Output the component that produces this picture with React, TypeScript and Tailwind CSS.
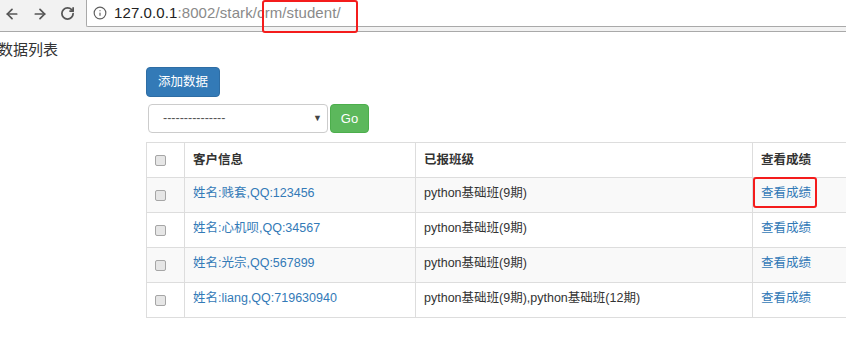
import { ArrowLeft, ArrowRight, RotateCw, Info } from "lucide-react";

const rows = [
  { name: "姓名:贱套,QQ:123456", classes: "python基础班(9期)" },
  { name: "姓名:心机呗,QQ:34567", classes: "python基础班(9期)" },
  { name: "姓名:光宗,QQ:567899", classes: "python基础班(9期)" },
  { name: "姓名:liang,QQ:719630940", classes: "python基础班(9期),python基础班(12期)" },
];

function Checkbox() {
  return (
    <span className="ml-[8px] block h-[11px] w-[11px] rounded-[2px] border border-[#a6a6a6] bg-[#e6e6e6]" />
  );
}

function BrowserBar() {
  return (
    <div className="flex h-[32px] items-start border-b border-[#a9a9a9] bg-[#f2f2f2]">
      <div className="flex h-[27px] w-[86px] items-center gap-[12px] pl-[4px] text-[#555]">
        <ArrowLeft size={16} strokeWidth={2.6} />
        <ArrowRight size={16} strokeWidth={2.6} />
        <RotateCw size={15} strokeWidth={2.8} />
      </div>
      <div className="flex h-[27px] flex-1 items-center rounded-bl-[2px] border-b border-l border-[#a9a9a9] bg-white pl-[6px]">
        <Info size={14} strokeWidth={2} className="text-[#5f5f5f]" />
        <span className="ml-[7px] text-[15px] tracking-[0.1px] text-[#222]">
          127.0.0.1
          <span className="text-[#8a8a8a]">:8002/stark/crm/student/</span>
        </span>
      </div>
    </div>
  );
}

export default function App() {
  return (
    <div
      className="relative h-[337px] w-[846px] overflow-hidden bg-white text-[#333]"
      style={{ fontFamily: '"Liberation Sans", "Noto Sans CJK SC", sans-serif' }}
    >
      <BrowserBar />

      <div className="ml-[-2px] mt-[7px] text-[15px] leading-[21px] text-[#333]">数据列表</div>

      <div className="pl-[146px]">
        <button className="mt-[7px] flex h-[30px] w-[74px] items-center justify-center rounded-[4px] border border-[#2e6da4] bg-[#337ab7] text-[12.5px] text-white">
          添加数据
        </button>

        <div className="mt-[7px] flex items-center gap-[2px] pl-[2px]">
          <div className="flex h-[29px] w-[180px] items-center justify-between rounded-[4px] border border-[#ccc] bg-white pl-[14px] pr-[5px] text-[12.5px] text-[#555]">
            <span>---------------</span>
            <span className="text-[9px] text-[#444]">▼</span>
          </div>
          <button className="flex h-[29px] w-[39px] items-center justify-center rounded-[4px] border border-[#4cae4c] bg-[#5cb85c] text-[13px] text-white">
            Go
          </button>
        </div>

        <table className="mt-[9px] w-[720px] border-collapse text-[12.5px] leading-[18px]">
          <colgroup>
            <col className="w-[38px]" />
            <col className="w-[231px]" />
            <col className="w-[337px]" />
            <col />
          </colgroup>
          <thead>
            <tr className="h-[35px]">
              <th className="border border-[#ddd] align-middle">
                <Checkbox />
              </th>
              <th className="border border-[#ddd] px-[8px] text-left align-middle font-bold">客户信息</th>
              <th className="border border-[#ddd] px-[8px] text-left align-middle font-bold">已报班级</th>
              <th className="border border-[#ddd] px-[8px] text-left align-middle font-bold">查看成绩</th>
            </tr>
          </thead>
          <tbody>
            {rows.map((r, i) => (
              <tr key={i} className={i % 2 === 0 ? "h-[35px] bg-[#f9f9f9]" : "h-[35px] bg-white"}>
                <td className="border border-[#ddd] align-middle">
                  <Checkbox />
                </td>
                <td className="border border-[#ddd] px-[8px] pb-[4px] align-middle text-[#337ab7]">{r.name}</td>
                <td className="border border-[#ddd] px-[8px] pb-[4px] align-middle">{r.classes}</td>
                <td className="border border-[#ddd] px-[8px] pb-[4px] align-middle text-[#337ab7]">查看成绩</td>
              </tr>
            ))}
          </tbody>
        </table>
      </div>

      {/* annotation boxes */}
      <div className="absolute left-[262px] top-0 h-[33px] w-[96px] rounded-[3px] border-2 border-[#f41c1c]" />
      <div className="absolute left-[753px] top-[177px] h-[31px] w-[64px] rounded-[3px] border-2 border-[#f41c1c]" />
    </div>
  );
}
